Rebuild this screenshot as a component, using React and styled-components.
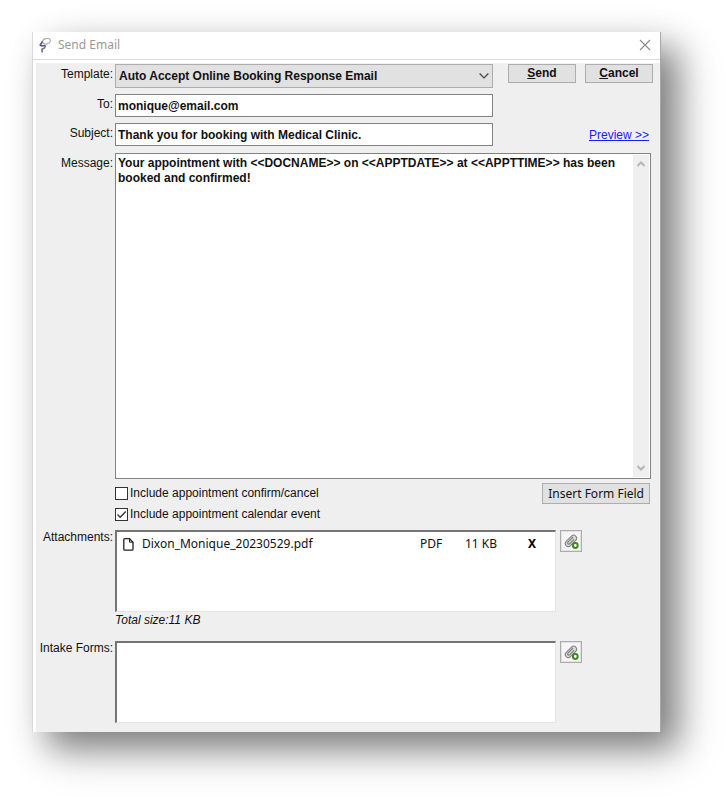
import React, { useState } from "react";
import styled, { createGlobalStyle } from "styled-components";

const GlobalStyle = createGlobalStyle`
  * {
    box-sizing: border-box;
  }
  body {
    margin: 0;
    background: #fff;
  }
`;

const ui = `"Liberation Sans", Arial, sans-serif`;
const tahoma = `"Noto Sans", "Open Sans", sans-serif`;

const Page = styled.main`
  padding: 32px 65px 65px 32px;
  font-family: ${ui};
  font-size: 12px;
  line-height: 15px;
  color: #111;
`;

const Dialog = styled.div`
  background: #fff;
  border-left: 1px solid #d9d9d9;
  border-right: 1px solid #a8a8a8;
  box-shadow:
    16px 16px 32px rgba(0, 0, 0, 0.45),
    20px 20px 50px rgba(0, 0, 0, 0.12);
`;

const TitleBar = styled.header`
  display: flex;
  align-items: center;
  height: 28px;
  padding: 0 9px 1px 5px;
  border-bottom: 1px solid #dcdcdc;
`;

const Title = styled.h1`
  flex: 1;
  margin: 0 0 0 6px;
  font-family: ${tahoma};
  font-size: 12px;
  font-weight: 400;
  line-height: 16px;
  color: #999;
`;

const CloseButton = styled.button`
  display: flex;
  padding: 0;
  border: 0;
  background: none;
  color: #8c8c8c;
`;

const Form = styled.form`
  margin: 3px 0 0 3px;
  padding: 1px 7px 9px 0;
  background: #efefef;
`;

const TopSection = styled.div`
  display: flex;
  gap: 15px;
  margin-bottom: 7px;
`;

const Fields = styled.div`
  flex: 1;
  display: flex;
  flex-direction: column;
  gap: 6px;
`;

const Row = styled.div`
  display: grid;
  grid-template-columns: 77px 1fr;
  column-gap: 2px;
  align-items: start;
  padding-right: ${(props) => (props.$inset ? "2px" : "0")};
`;

const Label = styled.label`
  padding-top: ${(props) => (props.$flush ? "0" : "3px")};
  text-align: right;
  white-space: nowrap;
`;

const TextInput = styled.input`
  width: 100%;
  height: 23px;
  padding: 0 2px;
  border: 1px solid #828282;
  background: #fff;
  font: bold 12px/15px ${ui};
  color: #111;
  outline: 0;
`;

const SelectBox = styled.div`
  position: relative;
  display: flex;

  svg {
    position: absolute;
    right: 4px;
    top: 8px;
    pointer-events: none;
  }
`;

const Select = styled.select`
  width: 100%;
  height: 24px;
  padding: 0 20px 0 3px;
  border: 1px solid #adadad;
  border-radius: 0;
  background: #e1e1e1;
  font: bold 12px/15px ${ui};
  color: #111;
  appearance: none;
  outline: 0;
`;

const Side = styled.div`
  display: flex;
  flex-direction: column;
  justify-content: space-between;
  width: 145px;
  padding-bottom: 3px;
`;

const Actions = styled.div`
  display: flex;
  gap: 9px;
`;

const Button = styled.button`
  flex: 1;
  height: 19px;
  padding: 0;
  border: 1px solid #adadad;
  background: #e1e1e1;
  font: bold 12px/15px ${ui};
  color: #111;
`;

const PreviewLink = styled.a`
  align-self: flex-end;
  margin-right: 4px;
  color: #1a1aff;
`;

const MessageBox = styled.div`
  display: flex;
  height: 326px;
  padding: 1px;
  border: 1px solid #828282;
  background: #fff;
`;

const MessageInput = styled.textarea`
  flex: 1;
  min-width: 0;
  padding: 1px;
  border: 0;
  background: #fff;
  font: bold 12px/15px ${ui};
  color: #111;
  resize: none;
  outline: 0;
  overflow: hidden;
`;

const ScrollTrack = styled.div`
  display: flex;
  flex-direction: column;
  justify-content: space-between;
  align-items: center;
  width: 16px;
  padding: 6px 0;
  background: #efefef;
`;

const Options = styled.div`
  display: flex;
  justify-content: space-between;
  align-items: flex-start;
  padding: 4px 3px 8px 79px;
`;

const Checks = styled.div`
  display: flex;
  flex-direction: column;
  gap: 6px;
  padding-top: 3px;
`;

const CheckLabel = styled.label`
  position: relative;
  display: flex;
  align-items: center;
  gap: 2px;

  svg {
    position: absolute;
    left: 0;
    top: 1px;
    pointer-events: none;
  }
`;

const CheckInput = styled.input`
  width: 13px;
  height: 13px;
  margin: 0;
  border: 1px solid #333;
  background: #fff;
  appearance: none;
`;

const InsertButton = styled.button`
  height: 21px;
  padding: 0 5px;
  border: 1px solid #adadad;
  background: #e1e1e1;
  font: 12px/16px ${tahoma};
  color: #111;
  white-space: nowrap;
`;

const ListRow = styled.div`
  display: flex;
  align-items: flex-start;
  gap: 4px;
  padding-right: 71px;
`;

const ListBox = styled.div`
  flex: 1;
  height: 82px;
  padding: 3px 5px;
  border: 2px solid #e3e3e3;
  border-top-color: #757575;
  border-left-color: #757575;
  border-right-width: 1px;
  border-bottom-width: 1px;
  background: #fff;
`;

const FileTable = styled.table`
  width: 100%;
  border-collapse: collapse;
  table-layout: fixed;
  font: 12px/18px ${tahoma};

  td {
    padding: 0;
    white-space: nowrap;
  }

  svg {
    display: block;
    margin-left: 1px;
  }
`;

const Col = styled.col`
  width: ${(props) => props.$w};
`;

const RemoveButton = styled.button`
  padding: 0;
  border: 0;
  background: none;
  font: bold 12px/18px ${tahoma};
  color: #000;
`;

const AttachButton = styled.button`
  display: flex;
  align-items: center;
  justify-content: center;
  width: 22px;
  height: 22px;
  padding: 0;
  border: 1px solid #adadad;
  background: #f6f6f6;
  box-shadow: inset 0 0 0 1px #e1e1e1;
`;

const Total = styled.p`
  margin: 1px 0 13px 79px;
  font-style: italic;
`;

function AppLogo() {
  return (
    <svg width="14" height="17" viewBox="0 0 14 17" fill="none">
      <ellipse
        cx="8.500"
        cy="4.200"
        rx="3.900"
        ry="2.700"
        transform="rotate(-15 8.500 4.200)"
        stroke="#b0b0b0"
        strokeWidth="1.200"
      />
      <path d="M4.500 4.500L2.200 8L3.500 9L7.500 8.500" stroke="#55528a" strokeWidth="1.600" />
      <path d="M7.500 8.500L6.500 11L4 12.200L4.200 15.500" stroke="#77758f" strokeWidth="1.700" />
    </svg>
  );
}

function CloseIcon() {
  return (
    <svg width="12" height="12" viewBox="0 0 12 12">
      <path d="M1 1L11 11M11 1L1 11" stroke="currentColor" strokeWidth="1.100" />
    </svg>
  );
}

function Chevron({ up, color, size = 8, weight = 2 }) {
  return (
    <svg width={size} height={size - 2} viewBox="0 0 8 6" fill="none">
      <path
        d={up ? "M0.500 5L4 1.500L7.500 5" : "M0.500 1L4 4.500L7.500 1"}
        stroke={color}
        strokeWidth={weight}
      />
    </svg>
  );
}

function FileIcon() {
  return (
    <svg width="11" height="13" viewBox="0 0 11 13" fill="none">
      <path
        d="M1.700 0.700H6.500L10 4.200V11.300Q10 12.200 9.200 12.200H1.700Q0.800 12.200 0.800 11.300V1.600Q0.800 0.700 1.700 0.700Z"
        stroke="#222"
        strokeWidth="1.300"
      />
      <path d="M6.500 0.700V4.200H10" stroke="#222" />
    </svg>
  );
}

function ClipIcon() {
  return (
    <svg width="16" height="16" viewBox="0 0 16 16" fill="none">
      <g transform="rotate(-45 8 7.500)" stroke="#808080">
        <rect x="1" y="4.700" width="13.500" height="6" rx="3" fill="#dcdcdc" />
        <path d="M12 6.500H5Q3.500 6.500 3.500 7.700T5 8.900H11" strokeWidth="1.200" />
      </g>
      <circle cx="12.300" cy="12.500" r="2.400" fill="#fff" stroke="#408a20" strokeWidth="2" />
    </svg>
  );
}

function Check({ label, initial }) {
  const [checked, setChecked] = useState(initial);

  return (
    <CheckLabel>
      <CheckInput
        type="checkbox"
        checked={checked}
        onChange={() => setChecked(!checked)}
      />
      {checked && (
        <svg width="13" height="13" viewBox="0 0 13 13" fill="none">
          <path d="M2.500 6.500L5.200 9.200L10.700 3.500" stroke="#333" strokeWidth="1.300" />
        </svg>
      )}
      {label}
    </CheckLabel>
  );
}

const files = [{ name: "Dixon_Monique_20230529.pdf", type: "PDF", size: "11 KB" }];

function App() {
  return (
    <>
      <GlobalStyle />
      <Page>
        <Dialog role="dialog" aria-labelledby="title">
          <TitleBar>
            <AppLogo />
            <Title id="title">Send Email</Title>
            <CloseButton aria-label="Close">
              <CloseIcon />
            </CloseButton>
          </TitleBar>
          <Form onSubmit={(e) => e.preventDefault()}>
            <TopSection>
              <Fields>
                <Row>
                  <Label htmlFor="template">Template:</Label>
                  <SelectBox>
                    <Select id="template">
                      <option>Auto Accept Online Booking Response Email</option>
                    </Select>
                    <Chevron color="#444" size={10} weight={1} />
                  </SelectBox>
                </Row>
                <Row>
                  <Label htmlFor="to">To:</Label>
                  <TextInput id="to" defaultValue="monique@email.com" />
                </Row>
                <Row>
                  <Label htmlFor="subject">Subject:</Label>
                  <TextInput
                    id="subject"
                    defaultValue="Thank you for booking with Medical Clinic."
                  />
                </Row>
              </Fields>
              <Side>
                <Actions>
                  <Button type="submit">
                    <u>S</u>end
                  </Button>
                  <Button type="button">
                    <u>C</u>ancel
                  </Button>
                </Actions>
                <PreviewLink href="#preview">Preview &gt;&gt;</PreviewLink>
              </Side>
            </TopSection>

            <Row $inset>
              <Label htmlFor="message">Message:</Label>
              <MessageBox>
                <MessageInput
                  id="message"
                  spellCheck={false}
                  defaultValue="Your appointment with <<DOCNAME>> on <<APPTDATE>> at <<APPTTIME>> has been booked and confirmed!"
                />
                <ScrollTrack>
                  <Chevron up color="#b5b5b5" />
                  <Chevron color="#b5b5b5" />
                </ScrollTrack>
              </MessageBox>
            </Row>

            <Options>
              <Checks>
                <Check label="Include appointment confirm/cancel" initial={false} />
                <Check label="Include appointment calendar event" initial={true} />
              </Checks>
              <InsertButton type="button">Insert Form Field</InsertButton>
            </Options>

            <Row>
              <Label as="span" $flush>
                Attachments:
              </Label>
              <ListRow>
                <ListBox>
                  <FileTable aria-label="Attachments">
                    <colgroup>
                      <Col $w="20px" />
                      <Col />
                      <Col $w="45px" />
                      <Col $w="63px" />
                      <Col $w="22px" />
                    </colgroup>
                    <tbody>
                      {files.map((file) => (
                        <tr key={file.name}>
                          <td>
                            <FileIcon />
                          </td>
                          <td>{file.name}</td>
                          <td>{file.type}</td>
                          <td>{file.size}</td>
                          <td>
                            <RemoveButton type="button">X</RemoveButton>
                          </td>
                        </tr>
                      ))}
                    </tbody>
                  </FileTable>
                </ListBox>
                <AttachButton type="button" aria-label="Add attachment">
                  <ClipIcon />
                </AttachButton>
              </ListRow>
            </Row>
            <Total>Total size:11 KB</Total>

            <Row>
              <Label as="span" $flush>
                Intake Forms:
              </Label>
              <ListRow>
                <ListBox />
                <AttachButton type="button" aria-label="Add intake form">
                  <ClipIcon />
                </AttachButton>
              </ListRow>
            </Row>
          </Form>
        </Dialog>
      </Page>
    </>
  );
}

export default App;
